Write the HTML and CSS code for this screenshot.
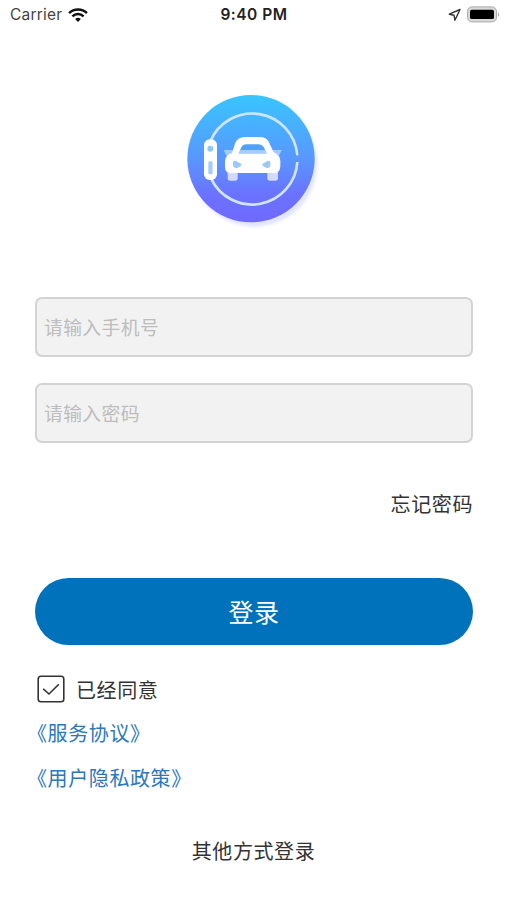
FILE: index.html
```html
<!DOCTYPE html>
<html lang="zh-CN">
<head>
<meta charset="utf-8">
<title>登录</title>
<link rel="stylesheet" href="styles.css">
</head>
<body>
<header class="status">
  <div class="status-left">
    <span class="carrier">Carrier</span>
    <svg class="wifi" width="20" height="14" viewBox="0 0 20 14" fill="none" stroke="#111" stroke-width="2.5">
      <path d="M1.1 5.1a12.6 12.6 0 0 1 17.8 0"/>
      <path d="M4.4 8.4a7.9 7.9 0 0 1 11.2 0"/>
      <path d="M10 14 7.1 11.1a4.1 4.1 0 0 1 5.8 0Z" fill="#111" stroke="none"/>
    </svg>
  </div>
  <span class="time">9:40 PM</span>
  <div class="status-right">
    <svg width="14" height="14" viewBox="0 0 14 14" fill="none" stroke="#333" stroke-width="1.4" stroke-linejoin="round"><path d="M13 1.5 2.3 6.2l4.7 1 .9 5Z"/></svg>
    <svg width="34" height="18" viewBox="0 0 34 18"><rect x="1.5" y=".9" width="29" height="15" rx="4.5" fill="#d9d9d9" stroke="#aaa"/><rect x="4" y="3.7" width="24" height="9.4" rx="1.7" fill="#000"/><path d="M32 6.2q2.4 2.2 0 4.5Z" fill="#aaa"/></svg>
  </div>
</header>
<main>
  <svg class="logo" width="155" height="155" viewBox="0 0 465 465">
    <defs>
      <linearGradient id="disc" x1="0" y1="0" x2="0" y2="1"><stop offset="0" stop-color="#38c6fe"/><stop offset=".5" stop-color="#5997ff"/><stop offset=".78" stop-color="#6b72ff"/><stop offset="1" stop-color="#7169ff"/></linearGradient>
      <filter id="soft"><feGaussianBlur stdDeviation="4"/></filter>
    </defs>
    <circle cx="238" cy="236" r="189" fill="#e1e5ff" filter="url(#soft)"/>
    <circle cx="228" cy="221" r="191" fill="url(#disc)"/>
    <g fill="none" stroke="#d0e4ff" stroke-width="8">
      <path d="M106 169A136 136 0 0 1 367 211"/>
      <path d="M367 231A136 136 0 0 1 108 280"/>
    </g>
    <rect x="87" y="163" width="39" height="122" rx="17" fill="#fff"/>
    <circle cx="106" cy="191" r="9" fill="#8dc8fb"/>
    <rect x="100" y="229" width="13" height="39" rx="4" fill="#a5cdfb"/>
    <path d="M146 195H320L313 211H153Z" fill="#a5cafc"/>
    <rect x="158" y="251" width="30" height="36" rx="8" fill="#d6d9ff"/>
    <rect x="277" y="251" width="32" height="36" rx="8" fill="#d6d9ff"/>
    <path fill="#fff" fill-rule="evenodd" d="M171 204 180 176Q187 156 209 156H257Q276 156 284 176L296 202Q316 211 316 228V242Q316 264 297 264H168Q150 264 150 245V229Q150 210 171 204ZM190 206H276L266 186Q261 178 251 178H214Q203 178 199 187Z"/>
    <path d="M174 232Q176 225 185 229L198 236Q201 239 198 242L187 249Q176 250 174 243Z" fill="#9bcafa"/>
    <path d="M286 232Q284 225 276 229L263 236Q260 239 263 242L274 249Q285 250 286 243Z" fill="#9bcafa"/>
  </svg>
  <form class="form">
    <input class="field" type="text" placeholder="请输入手机号">
    <input class="field" type="password" placeholder="请输入密码">
    <a class="forgot">忘记密码</a>
    <button class="submit" type="button">登录</button>
    <label class="agree">
      <svg width="28" height="28" viewBox="0 0 28 28" fill="none" stroke="#333" stroke-width="1.6"><rect x="1.2" y="1.2" width="25.6" height="25.6" rx="2.8"/><path d="M6.2 13.8 12 19l9.8-9.8"/></svg>
      <span>已经同意</span>
    </label>
    <a class="link">《服务协议》</a>
    <a class="link">《用户隐私政策》</a>
  </form>
  <a class="other">其他方式登录</a>
</main>
</body>
</html>
```
FILE: styles.css
```css
* { box-sizing: border-box; }
body {
  margin: 0;
  height: 900px;
  overflow: hidden;
  background: #fff;
  color: #333;
  font-family: "Noto Sans CJK SC", sans-serif;
  font-size: 20px;
  letter-spacing: .6px;
}
svg { display: block; flex: none; }
.status {
  height: 30px;
  padding: 0 7px 0 10px;
  display: grid;
  grid-template-columns: 1fr auto 1fr;
  align-items: center;
  font-family: Inter, sans-serif;
  font-size: 15.5px;
  line-height: 30px;
}
.status-left, .status-right { display: flex; align-items: center; }
.status-left { gap: 6px; height: 28px; }
.carrier { color: #444; letter-spacing: .2px; }
.time { color: #222; font-weight: 600; letter-spacing: .5px; margin-right: 2px; }
.status-right { justify-content: flex-end; gap: 5px; height: 28px; }
main { display: flex; flex-direction: column; align-items: center; padding: 55px 34px 0; }
.logo { margin-right: 2px; }
.form { width: 438px; margin: 57px 0 0 1px; display: flex; flex-direction: column; }
.field {
  width: 100%;
  height: 60px;
  margin-bottom: 26px;
  padding: 0 7px 2px;
  border: 2px solid #d3d3d3;
  border-radius: 7px;
  background: #f2f2f2;
  font: 18.8px "Noto Sans CJK SC", sans-serif;
  letter-spacing: .4px;
  outline: none;
}
.field::placeholder { color: #bdbdbd; opacity: 1; }
.forgot { align-self: flex-end; margin: 20px 0 0; line-height: 30px; }
.submit {
  height: 67px;
  margin-top: 59px;
  padding: 0 0 1px;
  border: 0;
  border-radius: 34px;
  background: #0072bc;
  color: #fff;
  font: 25px "Noto Sans CJK SC", sans-serif;
  letter-spacing: .6px;
}
.agree { display: flex; align-items: center; gap: 11px; margin: 30px 0 0 2px; height: 28px; }
.link { color: #2a78bd; margin: 15px 0 0 -8px; line-height: 29px; }
.link + .link { margin-top: 16px; }
.other { margin: 44px 0 0; line-height: 29px; }
```
